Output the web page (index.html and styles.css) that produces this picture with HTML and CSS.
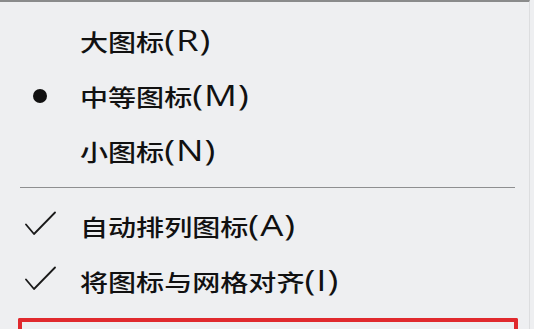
FILE: index.html
```html
<!DOCTYPE html>
<html lang="zh-CN">
<head>
<meta charset="utf-8">
<title>查看菜单</title>
<link rel="stylesheet" href="styles.css">
</head>
<body>
<div class="menu">
  <div class="item">
    <span class="mark"></span>
    <span class="label">大图标<span class="key">(R)</span></span>
  </div>
  <div class="item">
    <span class="mark"><span class="dot"></span></span>
    <span class="label">中等图标<span class="key">(M)</span></span>
  </div>
  <div class="item">
    <span class="mark"></span>
    <span class="label">小图标<span class="key">(N)</span></span>
  </div>
  <div class="sep"><div class="sep-line"></div></div>
  <div class="item">
    <span class="mark"><svg class="check" width="32" height="26" viewBox="0 0 32 26"><path d="M2 13.5 L10 23 L31 1.5" fill="none" stroke="#1a1a1a" stroke-width="1.8" stroke-linecap="round" stroke-linejoin="round"/></svg></span>
    <span class="label">自动排列图标<span class="key">(A)</span></span>
  </div>
  <div class="item">
    <span class="mark"><svg class="check" width="32" height="26" viewBox="0 0 32 26"><path d="M2 13.5 L10 23 L31 1.5" fill="none" stroke="#1a1a1a" stroke-width="1.8" stroke-linecap="round" stroke-linejoin="round"/></svg></span>
    <span class="label">将图标与网格对齐<span class="key">(I)</span></span>
  </div>
  <div class="highlight"></div>
</div>
</body>
</html>
```

FILE: styles.css
```css
html, body {
  margin: 0;
  padding: 0;
  background: #eeeff1;
}

body {
  width: 534px;
  height: 329px;
  overflow: hidden;
}

.menu {
  box-sizing: border-box;
  width: 530px;
  height: 329px;
  overflow: hidden;
  border-top: 2px solid #8a8b8b;
  border-right: 1px solid #dcdddf;
  padding-top: 11px;
  background: #eeeff1;
  color: #111;
  font-family: "Noto Sans CJK SC", "Noto Sans", sans-serif;
}

.item {
  display: flex;
  align-items: center;
  height: 55px;
}

.mark {
  display: flex;
  align-items: center;
  justify-content: center;
  width: 80px;
  height: 55px;
  flex: none;
}

.dot {
  width: 14px;
  height: 14px;
  border-radius: 50%;
  background: #111;
}

.check {
  display: block;
  margin-top: -3px;
}

.label {
  display: inline-block;
  font-size: 23px;
  font-weight: 500;
  line-height: 30px;
  white-space: nowrap;
  transform: scaleX(1.22);
  transform-origin: left center;
}

.key {
  font-family: "Open Sans", "Noto Sans", sans-serif;
  font-size: 30px;
  font-weight: 400;
  letter-spacing: 0.8px;
}

.sep {
  box-sizing: border-box;
  height: 20px;
  padding-top: 9px;
  padding-left: 20px;
}

.sep-line {
  width: 495px;
  height: 1px;
  background: #8e8f90;
}

.highlight {
  box-sizing: border-box;
  width: 500px;
  height: 20px;
  margin-top: 10px;
  margin-left: 18px;
  border: 4px solid #e0292d;
  border-bottom: none;
  border-radius: 2px 2px 0 0;
}
```
